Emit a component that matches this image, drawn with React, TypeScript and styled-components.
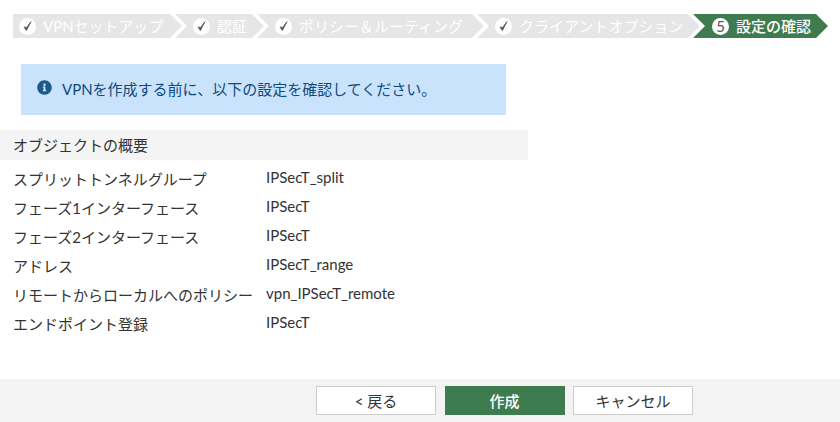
import React from 'react'
import styled, { createGlobalStyle } from 'styled-components'
import { FaInfoCircle } from 'react-icons/fa'

const GlobalStyle = createGlobalStyle`
  html, body {
    margin: 0;
    padding: 0;
    background: #fff;
  }

  body {
    font: 15px / 18px Lato, "Noto Sans CJK JP", sans-serif;
    color: #333;
  }
`

const Page = styled.div`
  width: 840px;
  height: 422px;
  display: flex;
  flex-direction: column;
  overflow: hidden;
`

const Wizard = styled.div`
  display: flex;
  padding: 14px 0 0 13px;
`

const Step = styled.div<{ $width: number; $current?: boolean; $first?: boolean }>`
  width: ${p => p.$width}px;
  height: 24px;
  margin-right: -7px;
  padding-left: ${p => (p.$first ? 6 : p.$current ? 19 : 18)}px;
  box-sizing: border-box;
  display: flex;
  align-items: center;
  gap: 7px;
  flex: none;
  white-space: nowrap;
  background: ${p => (p.$current ? '#3e7c4f' : '#e6e6e6')};
  color: #fff;
  font-weight: ${p => (p.$current ? 500 : 400)};
  clip-path: ${p =>
    p.$first
      ? 'polygon(0 0, calc(100% - 12px) 0, 100% 50%, calc(100% - 12px) 100%, 0 100%)'
      : 'polygon(0 0, calc(100% - 12px) 0, 100% 50%, calc(100% - 12px) 100%, 0 100%, 12px 50%)'};
`

const StepBadge = styled.span`
  width: 17px;
  height: 17px;
  border-radius: 50%;
  background: #fff;
  color: #555;
  display: flex;
  align-items: center;
  justify-content: center;
  flex: none;
  font-size: 15px;
  font-weight: 400;
  line-height: 17px;
`

const Alert = styled.div`
  width: 485px;
  height: 51px;
  margin: 26px 0 0 21px;
  padding: 16px 0 0 16px;
  box-sizing: border-box;
  display: flex;
  gap: 10px;
  background: #c9e3fd;
  color: #0f4a7c;
`

const AlertIcon = styled(FaInfoCircle)`
  width: 15px;
  height: 15px;
  margin-top: 0;
  color: #1c5a87;
  flex: none;
`

const SectionTitle = styled.div`
  width: 528px;
  height: 30px;
  margin-top: 15px;
  padding-left: 13px;
  box-sizing: border-box;
  display: flex;
  align-items: center;
  background: #f4f4f4;
`

const Summary = styled.div`
  flex: 1;
  padding: 4px 0 0 13px;
  display: grid;
  grid-template-columns: 253px 1fr;
  grid-auto-rows: 29px;
  align-content: start;
`

const Label = styled.div`
  padding-top: 6px;
  white-space: nowrap;
`

const Value = styled.div`
  padding-top: 4px;
`

const Footer = styled.div`
  height: 43px;
  padding: 7px 147px 0 316px;
  box-sizing: border-box;
  display: flex;
  gap: 8.5px;
  background: #f3f3f3;
`

const Button = styled.button<{ $primary?: boolean }>`
  width: 120px;
  height: 29px;
  padding: 0;
  font: inherit;
  color: ${p => (p.$primary ? '#fff' : '#333')};
  font-weight: ${p => (p.$primary ? 500 : 400)};
  background: ${p => (p.$primary ? '#3e7c4f' : '#fff')};
  border: ${p => (p.$primary ? '0' : '1px solid #ccc')};
`

const CheckMark = () => (
  <svg width="13" height="13" viewBox="0 0 13 13" aria-hidden="true">
    <path d="M3 7 L5.4 10.6 L10 1.6 L5.6 7.6 Z" fill="currentColor" stroke="currentColor" strokeWidth="0.8" strokeLinejoin="round" />
  </svg>
)

const steps = [
  { label: 'VPNセットアップ', width: 169 },
  { label: '認証', width: 89 },
  { label: 'ポリシー＆ルーティング', width: 227 },
  { label: 'クライアントオプション', width: 223 },
]

const rows = [
  ['スプリットトンネルグループ', 'IPSecT_split'],
  ['フェーズ1インターフェース', 'IPSecT'],
  ['フェーズ2インターフェース', 'IPSecT'],
  ['アドレス', 'IPSecT_range'],
  ['リモートからローカルへのポリシー', 'vpn_IPSecT_remote'],
  ['エンドポイント登録', 'IPSecT'],
]

const App = () => (
  <Page>
    <GlobalStyle />
    <Wizard>
      {steps.map((s, i) => (
        <Step key={s.label} $width={s.width} $first={i === 0}>
          <StepBadge>
            <CheckMark />
          </StepBadge>
          {s.label}
        </Step>
      ))}
      <Step $width={135} $current>
        <StepBadge>5</StepBadge>
        設定の確認
      </Step>
    </Wizard>
    <Alert>
      <AlertIcon />
      VPNを作成する前に、以下の設定を確認してください。
    </Alert>
    <SectionTitle>オブジェクトの概要</SectionTitle>
    <Summary>
      {rows.map(([label, value]) => (
        <React.Fragment key={label}>
          <Label>{label}</Label>
          <Value>{value}</Value>
        </React.Fragment>
      ))}
    </Summary>
    <Footer>
      <Button>&lt; 戻る</Button>
      <Button $primary>作成</Button>
      <Button>キャンセル</Button>
    </Footer>
  </Page>
)

export default App
